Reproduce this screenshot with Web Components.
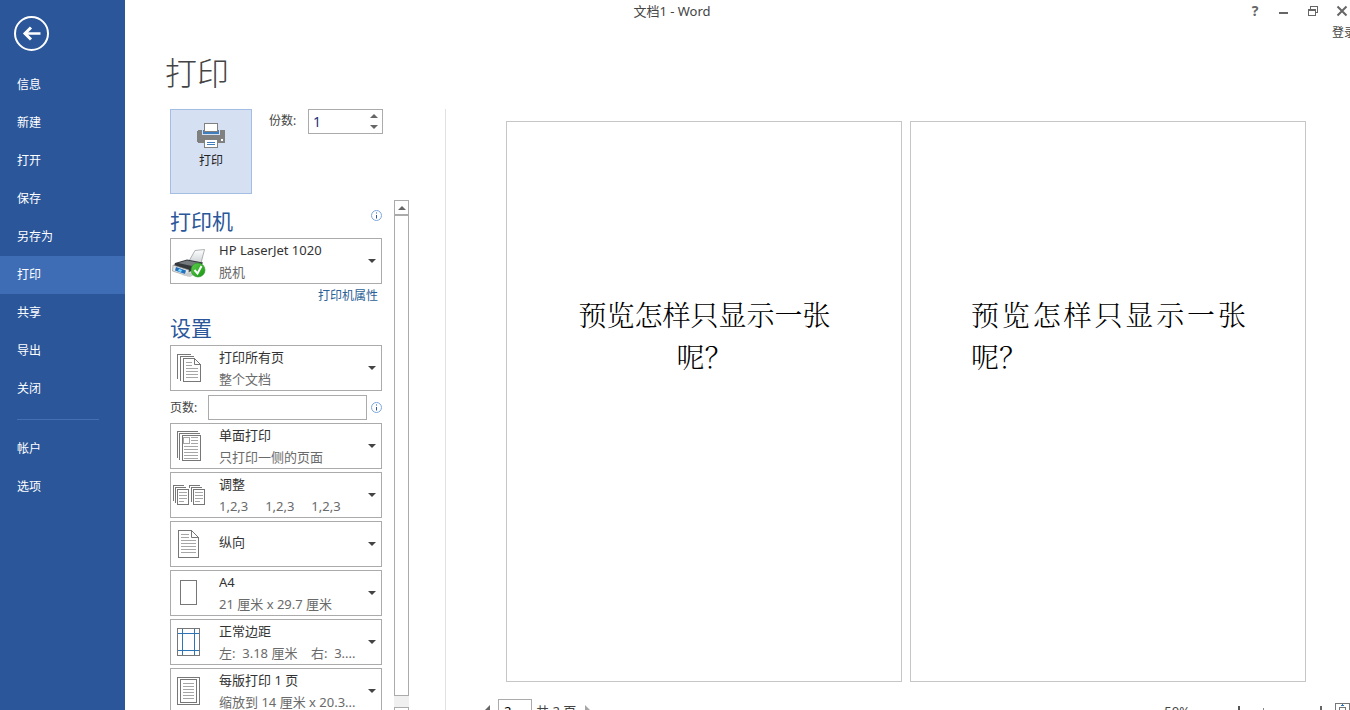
<!DOCTYPE html>
<html lang="zh-CN">
<head>
<meta charset="utf-8">
<title>文档1 - Word</title>
<style>
html, body { margin: 0; height: 100%; }
body { font: 12px/20px "Noto Sans", "Noto Sans CJK SC", sans-serif; color: #444; background: #fff; overflow: hidden; }
</style>
</head>
<body>
<word-backstage></word-backstage>
<script>
const define = (name, html, setup) => customElements.define(name, class extends HTMLElement {
  constructor() {
    super();
    const t = document.createElement('template');
    t.innerHTML = '<style>*{box-sizing:border-box}button,input,select{font:inherit;color:inherit;margin:0;padding:0;border:0;border-radius:0;background:none}svg{display:block}</style>' + html;
    this.attachShadow({ mode: 'open' }).append(t.content.cloneNode(true));
    if (setup) setup(this, this.shadowRoot);
  }
});

/* line icons used by the setting boxes, 36px wide */
const rules = (x1, x2, ys) => `<path stroke="#a6a6a6" d="${ys.map(y => `M${x1} ${y}.5H${x2}`).join('')}"/>`;
const ICONS = {
  printer: `<defs><linearGradient id="p" x1="0" y1="0" x2="0" y2="1"><stop offset="0" stop-color="#fff"/><stop offset="1" stop-color="#cfd3d6"/></linearGradient><linearGradient id="g" x1="0" y1="0" x2="1" y2="1"><stop offset="0" stop-color="#5fd14c"/><stop offset="1" stop-color="#169312"/></linearGradient></defs>
    <path d="M19 23 25 12.500 34.500 11.500 31 25Z" fill="url(#p)" stroke="#9a9da0" stroke-width=".8"/>
    <path d="M5 25 17 21.500 33 24.500 30 30 19 34 4 28Z" fill="#34383b"/><path d="M8 25 17 22.500 30 25 22 28Z" fill="#73797d"/>
    <path d="M3 27 19 32 18 38 2.500 33Z" fill="#e4e7e8" stroke="#888" stroke-width=".6"/><path d="M6 29 16 32.500 15 36 5 32.500Z" fill="#2470bd"/><path d="M9 31 12 32 11 34 8 33Z" fill="#7ee0ff"/><path d="M12 37 20 39 26 36 19 34Z" fill="#c9cccd"/>
    <circle cx="28" cy="32" r="7" fill="url(#g)" stroke="#28912a" stroke-width=".6"/><path d="M24.500 32 27.500 35.500 31.500 28" fill="none" stroke="#fff" stroke-width="2"/>`,
  pages: `<g shape-rendering="crispEdges" stroke="#777"><path d="M7.500 34V9.500H21M10.500 36V11.500H24"/><path d="M13.500 13.500H24.500L30.500 19.500V36.500H13.500Z" fill="#fff"/></g><path d="M24.500 14V19.500H30.500" stroke="#777"/>${rules(16, 22, [17, 20])}${rules(16, 28, [23, 26, 29, 32])}`,
  single: `<g shape-rendering="crispEdges" stroke="#777"><path d="M7.500 35V8.500H28M9.500 37V10.500H30"/><path d="M12.500 12.500H30.500V37.500H12.500Z" fill="#fff"/><path stroke="#a6a6a6" d="M13.500 14.500H19.500V20.500H13.500Z"/></g>${rules(21, 28, [14, 17, 20])}${rules(14, 28, [23, 26, 29, 32, 35])}`,
  collate: [0, 16].map(x => `<g transform="translate(${x})"><g shape-rendering="crispEdges" stroke="#777"><path d="M3.500 ${x ? 16 : 29}V13.500H14M5.500 ${x ? 30 : 31}V15.500H16"/><path d="M7.500 17.500H18.500V32.500H7.500Z" fill="#fff"/></g>${rules(9, 17, [20, 23, 26])}${rules(9, 14, [29])}</g>`).join(''),
  portrait: `<path shape-rendering="crispEdges" stroke="#777" d="M8.500 9.500H21.500L28.500 16.500V36.500H8.500Z"/><path stroke="#777" d="M21.500 9.500V16.500H28.500"/>${rules(11, 19, [13, 16])}${rules(11, 26, [19, 22, 25, 28, 31])}`,
  paper: `<path shape-rendering="crispEdges" stroke="#777" d="M10.500 10.500H26.500V34.500H10.500Z"/>`,
  margins: `<g shape-rendering="crispEdges"><path stroke="#777" d="M7.500 9.500H29.500V36.500H7.500Z"/><path stroke="#2e75b6" d="M12.500 10V36M24.500 10V36M8 14.500H29M8 31.500H29"/></g>`,
  sheet: `<path shape-rendering="crispEdges" stroke="#777" d="M7.500 9.500H29.500V36.500H7.500ZM10.500 11.500H26.500V34.500H10.500Z"/>${rules(13, 24, [15, 18, 21, 24, 27, 30])}`
};

define('nav-item', `<style>
  :host { display: block; }
  a { display: block; padding: 9px 17px; color: #fff; text-decoration: none; }
  :host([current]) a { background: #3e6db5; }
</style><a href="#"><slot></slot></a>`, (el, root) => {
  if (el.hasAttribute('current')) root.querySelector('a').setAttribute('aria-current', 'page');
});

define('backstage-nav', `<style>
  :host { display: flex; flex-direction: column; background: #2b579a; }
  button { width: 36px; height: 36px; margin: 15px 0 15px 13px; }
  hr { width: 82px; height: 1px; border: 0; margin: 11px 0 10px 17px; background: #4470b3; }
</style>
<button aria-label="返回"><svg width="36" height="36" fill="none" stroke="#fff" stroke-width="2"><circle cx="18.500" cy="18.500" r="16.500"/><path stroke-width="2.500" d="M27.500 18.500H11.500"/><path stroke-width="3" d="M18 12.500 12 18.500 18 24.500"/></svg></button>
<nav-item>信息</nav-item><nav-item>新建</nav-item><nav-item>打开</nav-item><nav-item>保存</nav-item><nav-item>另存为</nav-item><nav-item current>打印</nav-item><nav-item>共享</nav-item><nav-item>导出</nav-item><nav-item>关闭</nav-item>
<hr>
<nav-item>帐户</nav-item><nav-item>选项</nav-item>`);

define('title-bar', `<style>
  :host { display: grid; grid-template-columns: 1fr auto 1fr; grid-template-rows: 22px 22px; line-height: 22px; }
  .title { grid-column: 2; padding-right: 6px; font-size: 13px; }
  .win { display: flex; justify-content: flex-end; align-items: center; gap: 9px; }
  .win button { width: 20px; height: 22px; display: grid; place-items: center; color: #666; font-weight: bold; font-size: 14px; }
  .win button:last-child { margin-right: -2px; }
  .account { grid-column: 3; width: 18px; justify-self: end; white-space: nowrap; overflow: hidden; color: inherit; text-decoration: none; }
</style>
<span class="title">文档1 - Word</span>
<div class="win">
  <button aria-label="帮助">?</button>
  <button aria-label="最小化"><svg width="10" height="12"><path d="M0 7H9V9H0Z" fill="#666"/></svg></button>
  <button aria-label="还原"><svg width="12" height="12" fill="none" stroke="#666" shape-rendering="crispEdges"><path d="M3 3.500V1.500H10.500V7.500H8"/><path d="M1.500 4.500H8.500V10.500H1.500ZM1 5.500H9"/></svg></button>
  <button aria-label="关闭"><svg width="12" height="12" stroke="#666" stroke-width="2"><path d="M1.500 1.500 10.500 10.500M10.500 1.500 1.500 10.500"/></svg></button>
</div>
<a class="account" href="#">登录</a>`);

define('info-tip', `<style>:host { display: block; width: 11px; height: 11px; }</style>
<svg width="11" height="11" role="img" aria-label="信息"><circle cx="5.500" cy="5.500" r="5" fill="none" stroke="#7ba7dc"/><path d="M5 2.500H6V3.500H5ZM5 5H6V8.500H5Z" fill="#2b579a"/></svg>`);

define('setting-select', `<style>
  :host { display: grid; grid-template: 44px / 48px 1fr 20px; border: 1px solid #ababab; font-size: 13px; }
  svg, .sub { pointer-events: none; }
  .icon { grid-area: 1 / 1; fill: none; z-index: 1; }
  select { grid-area: 1 / 1 / 2 / 4; appearance: none; padding: 0 20px 22px 48px; color: #333; outline: 0; }
  :host(:not([sub])) select { padding-bottom: 4px; }
  .sub { grid-area: 1 / 2; align-self: end; line-height: 22px; white-space: pre; color: #6a6a6a; }
  .arrow { grid-area: 1 / 3; align-self: center; margin-left: 7px; }
</style>
<svg class="icon" width="36" height="44"></svg>
<select><option></option></select>
<span class="sub"></span>
<svg class="arrow" width="8" height="5"><path d="M0 0H8L4 4Z" fill="#444"/></svg>`, (el, root) => {
  const art = root.querySelector('.icon');
  art.innerHTML = `<g transform="translate(-1 -1)">${ICONS[el.getAttribute('icon')]}</g>`;
  root.querySelector('select').setAttribute('aria-label', el.getAttribute('name'));
  root.querySelector('option').textContent = el.getAttribute('value');
  root.querySelector('.sub').textContent = el.getAttribute('sub') || '';
});

define('copies-box', `<style>
  :host { display: flex; gap: 11px; align-items: flex-start; }
  label { width: 28px; line-height: 23px; white-space: nowrap; }
  .field { display: flex; width: 75px; height: 25px; border: 1px solid #ababab; }
  input { flex: 1; min-width: 0; padding-left: 4px; font-size: 14px; color: #1f2f7a; }
  .spin { display: grid; width: 16px; }
  .spin button { display: grid; place-items: center; }
</style>
<label for="n">份数:</label>
<span class="field"><input id="n" value="1" inputmode="numeric"><span class="spin">
<button aria-label="增加"><svg width="8" height="4"><path d="M0 4H8L4 0Z" fill="#666"/></svg></button>
<button aria-label="减少"><svg width="8" height="4"><path d="M0 0H8L4 4Z" fill="#666"/></svg></button></span></span>`);

define('print-button', `<style>
  button { display: flex; flex-direction: column; align-items: center; width: 82px; height: 85px; padding-top: 12px; gap: 3px; border: 1px solid #a3bde3; background: #d5e0f2; color: #222; }
</style>
<button><svg width="28" height="26" shape-rendering="crispEdges"><path d="M1 8H27L28 9V20L27 21H1L0 20V9Z" fill="#808080"/><path d="M5 7H23V13H5Z" fill="#d5e0f2"/><path d="M6 8H22V12H6Z" fill="#3f7dbd"/><path d="M7.500 1.500H20.500V9.500H7.500Z" fill="#fff" stroke="#808080"/><path d="M7.500 17.500H20.500V25.500H7.500Z" fill="#fff" stroke="#808080"/><path d="M10 20.500H18M10 22.500H18" stroke="#3f7dbd"/><path d="M24 17H26V19H24Z" fill="#fff"/></svg><slot></slot></button>`);

define('settings-list', `<style>
  :host { display: flex; gap: 12px; min-height: 0; overflow: hidden; }
  .list { width: 212px; }
  .head { display: flex; justify-content: space-between; }
  h2 { margin: 0; padding: 4px 0 1px; font-size: 21px; line-height: 32px; font-weight: 400; color: #2b579a; }
  .head info-tip { margin-top: 10px; }
  .head h2 { padding-top: 5px; }
  .link { text-align: right; padding-right: 4px; line-height: 24px; }
  a { color: #2b6196; text-decoration: none; }
  setting-select { margin-bottom: 3px; }
  .printer { margin-bottom: 0; }
  .range { display: flex; align-items: center; gap: 4px; margin: 4px 0 3px; }
  .range label { width: 34px; white-space: nowrap; }
  .range input { flex: 1; min-width: 0; height: 25px; border: 1px solid #ababab; padding: 0 4px; }
  .bar { display: flex; flex-direction: column; width: 15px; background: #f0f0f0; }
  .bar button { flex: none; height: 15px; display: grid; place-items: center; border: 1px solid #ababab; background: #fff; }
  .thumb { flex: 1; margin-bottom: 11px; border: 1px solid #ababab; background: #fff; }
  .bar .down { margin-bottom: -12px; }
</style>
<div class="list">
  <div class="head"><h2>打印机</h2><info-tip></info-tip></div>
  <setting-select class="printer" icon="printer" name="打印机" value="HP LaserJet 1020" sub="脱机"></setting-select>
  <div class="link"><a href="#">打印机属性</a></div>
  <h2>设置</h2>
  <setting-select icon="pages" name="打印范围" value="打印所有页" sub="整个文档"></setting-select>
  <div class="range"><label for="r">页数:</label><input id="r"><info-tip></info-tip></div>
  <setting-select icon="single" name="单双面" value="单面打印" sub="只打印一侧的页面"></setting-select>
  <setting-select icon="collate" name="调整" value="调整" sub="1,2,3&#160;&#160;&#160;&#160;&#160;1,2,3&#160;&#160;&#160;&#160;&#160;1,2,3"></setting-select>
  <setting-select icon="portrait" name="方向" value="纵向"></setting-select>
  <setting-select icon="paper" name="纸张" value="A4" sub="21 厘米 x 29.7 厘米"></setting-select>
  <setting-select icon="margins" name="边距" value="正常边距" sub="左:&#160; 3.18 厘米&#160;&#160;&#160; 右:&#160; 3...."></setting-select>
  <setting-select icon="sheet" name="每版页数" value="每版打印 1 页" sub="缩放到 14 厘米 x 20.3..."></setting-select>
</div>
<div class="bar"><button aria-label="向上滚动"><svg width="8" height="4"><path d="M0 4H8L4 0Z" fill="#666"/></svg></button><div class="thumb"></div><button class="down" aria-label="向下滚动"></button></div>`);

define('preview-page', `<style>
  :host { display: block; flex: 1; border: 1px solid #c6c6c6; padding: 174px 59px 0 60px; font: 28px/42px "Liberation Serif", "Noto Serif CJK SC", "Noto Sans CJK SC", serif; font-weight: 300; color: #000; }
  p { margin: 0; text-align: justify; }
  :host([centered]) p { text-align: center; }
</style><p><slot></slot></p>`);

define('preview-footer', `<style>
  :host { display: flex; align-items: flex-start; height: 28px; padding: 17px 0 0 38px; overflow: hidden; line-height: 24px; white-space: nowrap; }
  .pager, .zoom { display: flex; align-items: center; height: 24px; }
  .pager input { width: 34px; height: 24px; margin: 0 4px 0 8px; border: 1px solid #ababab; padding-left: 5px; font-size: 13px; color: #000; }
  .pager span { font-size: 13px; margin-right: 9px; }
  .zoom { margin-left: auto; font-size: 13px; }
  .zoom button { width: 14px; height: 24px; display: grid; place-items: center; }
  .minus { margin-left: 8px; }
  .zoom input { appearance: none; width: 102px; height: 24px; background: linear-gradient(#888, #888) center / 1px 6px no-repeat, linear-gradient(#aaa, #aaa) center / 100% 1px no-repeat; }
  input::-webkit-slider-thumb { appearance: none; width: 2px; height: 10px; background: #555; }
  .fit { margin: 0 1px 0 7px; }
</style>
<div class="pager">
  <button aria-label="上一页"><svg width="6" height="12"><path d="M6 0V12L0 6Z" fill="#666"/></svg></button>
  <input aria-label="当前页" value="2"><span>共 2 页</span>
  <button aria-label="下一页"><svg width="6" height="12"><path d="M0 0V12L6 6Z" fill="#a6a6a6"/></svg></button>
</div>
<div class="zoom"><span>50%</span>
  <button class="minus" aria-label="缩小"><svg width="10" height="2"><path d="M0 0H10V2H0Z" fill="#666"/></svg></button>
  <input type="range" aria-label="显示比例" min="0" max="100" value="26">
  <button aria-label="放大"><svg width="10" height="10"><path d="M4 0H6V4H10V6H6V10H4V6H0V4H4Z" fill="#666"/></svg></button>
  <button class="fit" aria-label="缩放到页面"><svg width="15" height="16" fill="none" shape-rendering="crispEdges"><path stroke="#777" d="M.5.5H14.500V15.500H.5ZM4.500 4.500H10.500V11.500H4.500Z"/><path fill="#2e75b6" d="M6 3H9V2H8V1H7V2H6ZM6 13H9V14H8V15H7V14H6ZM2 7H3V9H2ZM12 7H13V9H12Z"/></svg></button>
</div>`);

define('word-backstage', `<style>
  :host { display: grid; height: 100vh; grid-template: auto auto minmax(0, 1fr) / 125px 320px minmax(0, 1fr); }
  backstage-nav { grid-area: 1 / 1 / 4 / 2; }
  title-bar { grid-area: 1 / 1 / 2 / 4; }
  h1 { grid-area: 2 / 2 / 3 / 4; margin: 9px 0 16px 40px; font-size: 32px; line-height: 40px; font-weight: 300; }
  .controls { grid-area: 3 / 2; display: flex; flex-direction: column; gap: 6px; padding-left: 45px; min-height: 0; }
  .top { display: flex; gap: 17px; }
  .preview { grid-area: 3 / 3; display: flex; flex-direction: column; border-left: 1px solid #e1e1e1; }
  .pages { flex: 1; display: flex; gap: 8px; padding: 12px 44px 0 60px; }
</style>
<backstage-nav></backstage-nav>
<title-bar></title-bar>
<h1>打印</h1>
<section class="controls">
  <div class="top"><print-button>打印</print-button><copies-box></copies-box></div>
  <settings-list></settings-list>
</section>
<section class="preview">
  <div class="pages"><preview-page centered>预览怎样只显示一张呢？</preview-page><preview-page>预览怎样只显示一张呢？</preview-page></div>
  <preview-footer></preview-footer>
</section>`);
</script>
</body>
</html>
